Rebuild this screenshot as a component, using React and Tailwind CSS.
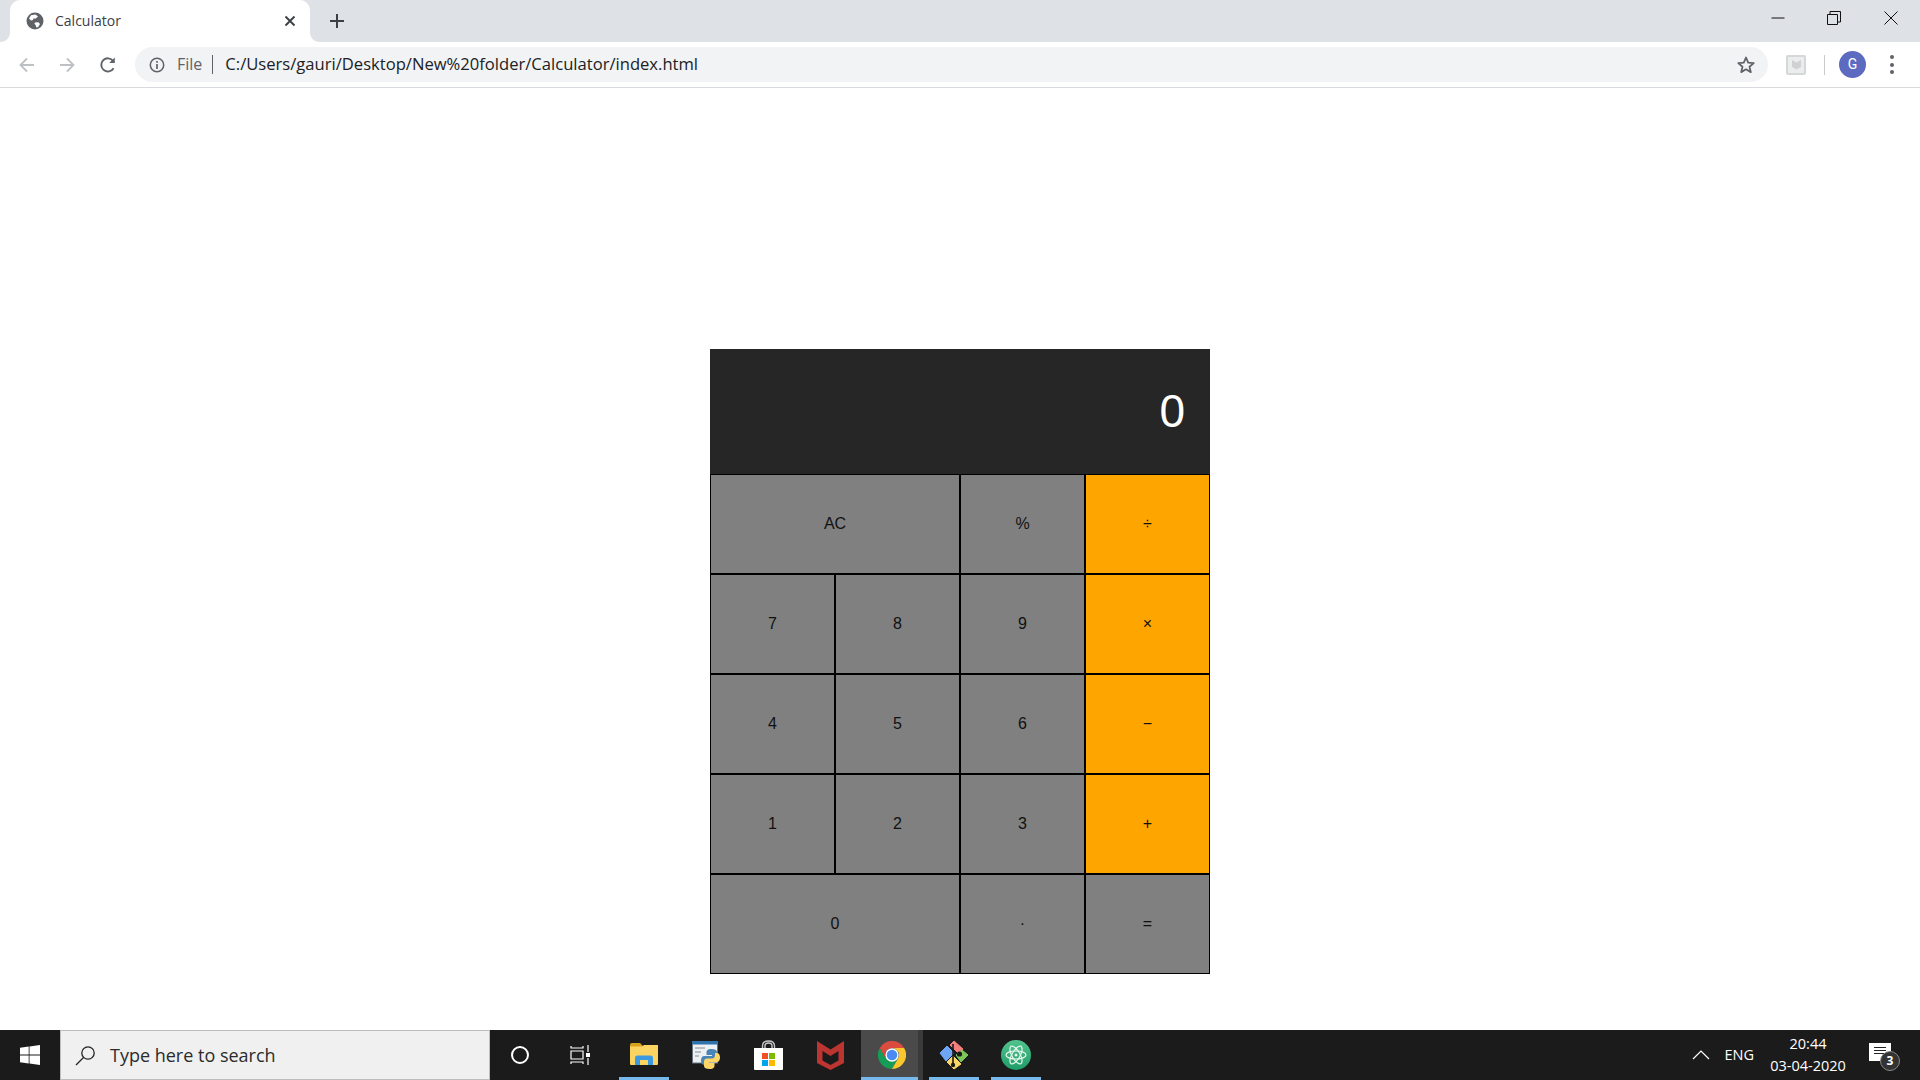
import { useState } from "react";

const uiFont = "font-['Open_Sans','Noto_Sans',sans-serif]";

const Flare = ({ side }) => (
  <svg
    width="10"
    height="10"
    viewBox="0 0 10 10"
    className={`absolute bottom-0 ${side === "left" ? "left-[-10px]" : "right-[-10px]"}`}
  >
    {side === "left" ? (
      <path d="M10 0V10H0C6 10 10 6 10 0Z" fill="#fff" />
    ) : (
      <path d="M0 0V10H10C4 10 0 6 0 0Z" fill="#fff" />
    )}
  </svg>
);

const GlobeIcon = () => (
  <svg width="18" height="18" viewBox="0 0 18 18">
    <circle cx="9" cy="9" r="8.5" fill="#5f6368" />
    <path
      d="M5 3.2L9.5 2.6 12 4.4 9.8 6.6 7.4 6.4 7 8 5 8.4 3 6.4ZM9 10.4L12.4 10.2 14 12 12.2 15 10.4 15.6 9.6 13 8.4 11.8Z"
      fill="#fff"
    />
  </svg>
);

const ToolIcon = ({ children, className }) => (
  <svg width="20" height="20" viewBox="0 0 20 20" fill="none" className={className}>
    {children}
  </svg>
);

const TabStrip = () => (
  <div className="h-[42px] bg-[#dee1e6] flex items-end pl-[10px] shrink-0">
    <div className="relative w-[300px] h-[42px] bg-white rounded-t-[10px] flex items-center pl-[16px] pr-[12px]">
      <Flare side="left" />
      <Flare side="right" />
      <GlobeIcon />
      <span className={`ml-[11px] mb-[2px] text-[14px] text-[#3c4043] ${uiFont}`}>Calculator</span>
      <svg width="12" height="12" viewBox="0 0 12 12" className="ml-auto mr-[2px]">
        <path d="M1.5 1.5L10.5 10.5M10.5 1.5L1.5 10.5" stroke="#3c4043" strokeWidth="1.9" />
      </svg>
    </div>
    <div className="h-[42px] flex items-center ml-[19px]">
      <svg width="16" height="16" viewBox="0 0 16 16">
        <path d="M8 1V15M1 8H15" stroke="#3c4043" strokeWidth="2" />
      </svg>
    </div>
    <div className="ml-auto h-[36px] self-start flex items-center text-black">
      <div className="w-[56px] flex justify-center">
        <svg width="14" height="14" viewBox="0 0 14 14">
          <path d="M0.5 7H13.5" stroke="#111" strokeWidth="1" />
        </svg>
      </div>
      <div className="w-[56px] flex justify-center">
        <svg width="14" height="14" viewBox="0 0 14 14" fill="none">
          <path d="M0.5 3.5H10.5V13.5H0.5ZM3 3.5V0.5H13.5V11H10.5" stroke="#111" strokeWidth="1" />
        </svg>
      </div>
      <div className="w-[58px] flex justify-center">
        <svg width="14" height="14" viewBox="0 0 14 14">
          <path d="M0.5 0.5L13.5 13.5M13.5 0.5L0.5 13.5" stroke="#111" strokeWidth="1" />
        </svg>
      </div>
    </div>
  </div>
);

const Toolbar = () => (
  <div className="h-[46px] bg-white border-b border-b-[#d9dadd] flex items-center shrink-0">
    <div className="w-[135px] flex items-center pl-[17px]">
      <ToolIcon>
        <path d="M17 10H4M10 3.5L3.5 10L10 16.5" stroke="#bdc1c6" strokeWidth="1.8" />
      </ToolIcon>
      <ToolIcon className="ml-[20px]">
        <path d="M3 10H16M10 3.5L16.5 10L10 16.5" stroke="#bdc1c6" strokeWidth="1.8" />
      </ToolIcon>
      <ToolIcon className="ml-[21px]">
        <path d="M15.6 13.2A6.6 6.6 0 1 1 15.2 6" stroke="#5f6368" strokeWidth="1.9" />
        <path d="M16.8 2.4V8H11.2Z" fill="#5f6368" />
      </ToolIcon>
    </div>
    <div className="w-[1633px] h-[35px] bg-[#f1f3f4] rounded-full flex items-center pl-[14px] pr-[12px]">
      <svg width="16" height="16" viewBox="0 0 16 16" fill="none">
        <circle cx="8" cy="8" r="6.7" stroke="#5f6368" strokeWidth="1.5" />
        <path d="M8 7V12M8 4V5.8" stroke="#5f6368" strokeWidth="1.7" />
      </svg>
      <span className={`ml-[12px] mb-[1px] text-[16px] text-[#5f6368] ${uiFont}`}>File</span>
      <span className="ml-[10px] w-[1px] h-[19px] bg-[#5f6368]"></span>
      <span className={`ml-[12px] text-[16.6px] text-[#202124] ${uiFont}`}>
        C:/Users/gauri/Desktop/New%20folder/Calculator/index.html
      </span>
      <svg width="20" height="20" viewBox="0 0 20 20" fill="none" className="ml-auto">
        <path
          d="M10 2.5L12.2 7.6 17.7 8.1 13.5 11.7 14.8 17.1 10 14.3 5.2 17.1 6.5 11.7 2.3 8.1 7.8 7.6Z"
          stroke="#5f6368"
          strokeWidth="1.8"
          strokeLinejoin="round"
        />
      </svg>
    </div>
    <div className="flex-1 flex items-center pl-[18px]">
      <div className="w-[20px] h-[20px] bg-[#eceeee] border-2 border-[#d5d8d8] rounded-[2px] flex items-center justify-center">
        <svg width="11" height="11" viewBox="0 0 11 11">
          <path d="M1 1L5.5 3.5 10 1V8L5.5 10.5 1 8Z" fill="#cfd2d2" />
        </svg>
      </div>
      <span className="ml-[18px] w-[1px] h-[20px] bg-[#c9cbce]"></span>
      <div className="ml-[14px] w-[27px] h-[27px] rounded-full bg-[#5c6bc0] flex items-center justify-center text-white text-[14px] font-['Roboto',sans-serif]">
        G
      </div>
      <div className="ml-[24px] flex flex-col gap-[3.5px]">
        <span className="w-[4px] h-[4px] rounded-full bg-[#5f6368]"></span>
        <span className="w-[4px] h-[4px] rounded-full bg-[#5f6368]"></span>
        <span className="w-[4px] h-[4px] rounded-full bg-[#5f6368]"></span>
      </div>
    </div>
  </div>
);

const keys = [
  { label: "AC", wide: true },
  { label: "%" },
  { label: "÷", op: true },
  { label: "7" },
  { label: "8" },
  { label: "9" },
  { label: "×", op: true },
  { label: "4" },
  { label: "5" },
  { label: "6" },
  { label: "−", op: true },
  { label: "1" },
  { label: "2" },
  { label: "3" },
  { label: "+", op: true },
  { label: "0", wide: true },
  { label: "·" },
  { label: "=" },
];

const Calculator = () => {
  const [value, setValue] = useState("0");

  const press = (label) => {
    if (label === "AC") setValue("0");
    else if (/[0-9]/.test(label)) setValue(value === "0" ? label : value + label);
  };

  return (
    <div className="w-[500px] font-['Liberation_Sans',Arial,sans-serif]">
      <div className="h-[125px] bg-[#262626] text-white text-[46px] flex items-center justify-end pr-[25px]">
        {value}
      </div>
      <div className="grid grid-cols-4">
        {keys.map((key) => (
          <button
            key={key.label}
            onClick={() => press(key.label)}
            className={`h-[100px] border border-black text-[16px] text-[#111] ${
              key.wide ? "col-span-2" : ""
            } ${key.op ? "bg-[#ffa500]" : "bg-[#808080]"}`}
          >
            {key.label}
          </button>
        ))}
      </div>
    </div>
  );
};

const FolderIcon = () => (
  <svg width="28" height="26" viewBox="0 0 28 26">
    <path d="M0 3Q0 1 2 1H10L13 4H26Q28 4 28 6V10H0Z" fill="#d9a21b" />
    <path d="M0 4.5H12L14 3H28V22Q28 23 27 23H1Q0 23 0 22Z" fill="#fcd462" />
    <path d="M5 23V16Q5 13.5 7.5 13.5H20.5Q23 13.5 23 16V23H18V18H10V23Z" fill="#3d9ae0" />
  </svg>
);

const PythonIcon = () => (
  <svg width="29" height="29" viewBox="0 0 29 29">
    <rect x="0.5" y="1" width="25" height="21" fill="#eef1f4" stroke="#69737d" strokeWidth="1" />
    <rect x="0" y="0" width="26" height="3.5" fill="#2f73ad" />
    <path d="M3 7H13M3 11H9M3 15H7" stroke="#a9adb2" strokeWidth="1.4" />
    <path
      d="M19.5 8C15 8 14.5 10 14.5 11.5V14H20V15H12.5C10 15 9 17 9 19.5 9 22 10 24 12.5 24H14V21.5C14 20 15 18.5 17 18.5H22C24 18.5 25 17 25 15.5V11C25 9 23 8 19.5 8Z"
      fill="#4b85b8"
    />
    <path
      d="M19.5 8C15 8 14.5 10 14.5 11.5V14H20V15H12.5C10 15 9 17 9 19.5 9 22 10 24 12.5 24H14V21.5C14 20 15 18.5 17 18.5H22C24 18.5 25 17 25 15.5V11C25 9 23 8 19.5 8Z"
      fill="#fcd667"
      transform="rotate(180 18.5 18)"
    />
  </svg>
);

const StoreIcon = () => (
  <svg width="29" height="30" viewBox="0 0 29 30">
    <path
      d="M8.5 9V6Q8.5 1 14.5 1 20.5 1 20.5 6V9M11 9V6Q11 3 14.5 3 18 3 18 6V9"
      fill="none"
      stroke="#c9c9c9"
      strokeWidth="1.4"
    />
    <path d="M0 8H29V29Q29 30 28 30H1Q0 30 0 29Z" fill="#fff" />
    <rect x="8" y="13" width="6" height="6" fill="#f25022" />
    <rect x="15" y="13" width="6" height="6" fill="#7fba00" />
    <rect x="8" y="20" width="6" height="6" fill="#00a4ef" />
    <rect x="15" y="20" width="6" height="6" fill="#ffb900" />
  </svg>
);

const McafeeIcon = () => (
  <svg width="27" height="29" viewBox="0 0 27 29">
    <path
      d="M0 0L13.5 8.5 27 0V22L13.5 29 0 22ZM5.5 10V19.5L13.5 24 21.5 19.5V10L13.5 15Z"
      fill="#bd3530"
      fillRule="evenodd"
    />
  </svg>
);

const ChromeIcon = () => (
  <svg width="28" height="28" viewBox="0 0 48 48">
    <path d="M3.2 12A24 24 0 0 0 24 48L34.4 30H13.6Z" fill="#169c56" />
    <path d="M44.8 12A24 24 0 0 1 24 48L34.4 30A12 12 0 0 0 24 12Z" fill="#fbc72d" />
    <path d="M3.2 12A24 24 0 0 1 44.8 12H24A12 12 0 0 0 13.6 30Z" fill="#dc4c3e" />
    <circle cx="24" cy="24" r="11.5" fill="#fff" />
    <circle cx="24" cy="24" r="9" fill="#4a8af4" />
  </svg>
);

const GitIcon = () => (
  <svg width="30" height="30" viewBox="0 0 30 30">
    <path d="M15 1L24 9 19 13 11 5Z" fill="#f57e7e" stroke="#f57e7e" strokeLinejoin="round" />
    <path d="M1 13L8 6 15 13 7 21Z" fill="#6ea6f5" stroke="#6ea6f5" strokeLinejoin="round" />
    <path d="M17 15L23 10 29 15 22 22Z" fill="#7dc75a" stroke="#7dc75a" strokeLinejoin="round" />
    <path d="M8 22L14 16 22 24 15 29Z" fill="#fbd765" stroke="#fbd765" strokeLinejoin="round" />
    <path d="M14 4V24" stroke="#1b1b1b" strokeWidth="1.6" />
    <circle cx="14" cy="25" r="2.2" fill="#1b1b1b" />
    <circle cx="20.5" cy="14" r="2.6" fill="#1b1b1b" />
  </svg>
);

const AtomIcon = () => (
  <svg width="30" height="30" viewBox="0 0 30 30" fill="none">
    <defs>
      <linearGradient id="atomFill" x1="0" y1="0" x2="0" y2="1">
        <stop offset="0" stopColor="#52c48d" />
        <stop offset="1" stopColor="#1f9c68" />
      </linearGradient>
    </defs>
    <circle cx="15" cy="15" r="15" fill="url(#atomFill)" />
    <g stroke="#e9f7ef" strokeWidth="1.2">
      <ellipse cx="15" cy="15" rx="10" ry="4" />
      <ellipse cx="15" cy="15" rx="10" ry="4" transform="rotate(60 15 15)" />
      <ellipse cx="15" cy="15" rx="10" ry="4" transform="rotate(120 15 15)" />
    </g>
    <circle cx="15" cy="15" r="1.5" fill="#e9f7ef" />
  </svg>
);

const TaskSlot = ({ children, open, active }) => (
  <div className={`relative w-[62px] h-full flex items-center justify-center ${active ? "bg-[#4a4a4a]" : ""}`}>
    {children}
    {open && (
      <span className={`absolute bottom-0 h-[3px] bg-[#76b9ed] ${active ? "inset-x-0" : "inset-x-[6px]"}`}></span>
    )}
    {active && <span className="absolute right-0 top-0 bottom-0 w-[5px] bg-[#3a3a3a]"></span>}
  </div>
);

const Taskbar = () => (
  <div className={`h-[50px] bg-[#1b1b1b] flex items-stretch shrink-0 text-white ${uiFont}`}>
    <div className="w-[60px] flex items-center justify-center">
      <svg width="20" height="20" viewBox="0 0 20 20" fill="#fff">
        <path d="M0 2.8L8.7 1.6V9.6H0ZM9.5 1.5L20 0V9.6H9.5ZM0 10.4H8.7V18.4L0 17.2ZM9.5 10.4H20V20L9.5 18.5Z" />
      </svg>
    </div>
    <div className="w-[430px] bg-[#f0f0f0] border border-[#bdbdbd] flex items-center pl-[14px]">
      <svg width="21" height="21" viewBox="0 0 21 21" fill="none">
        <circle cx="13" cy="8" r="6.2" stroke="#222" strokeWidth="1.3" />
        <path d="M8.5 12.5L1 20" stroke="#222" strokeWidth="1.3" />
      </svg>
      <span className="ml-[14px] text-[18px] text-[#2b2b2b]">Type here to search</span>
    </div>
    <div className="w-[60px] flex items-center justify-center">
      <span className="w-[18px] h-[18px] rounded-full border-[2.5px] border-white"></span>
    </div>
    <div className="w-[63px] flex items-center justify-center pr-[3px]">
      <svg width="20" height="20" viewBox="0 0 20 20" fill="none" stroke="#fff" strokeWidth="1.2">
        <path d="M1 1V3H13V1M1 6H13V14H1ZM1 19V17H13V19M18 0V7M18 13V20" />
        <rect x="16" y="8" width="4" height="4" fill="#fff" stroke="none" />
      </svg>
    </div>
    <TaskSlot open>
      <FolderIcon />
    </TaskSlot>
    <TaskSlot>
      <PythonIcon />
    </TaskSlot>
    <TaskSlot>
      <StoreIcon />
    </TaskSlot>
    <TaskSlot>
      <McafeeIcon />
    </TaskSlot>
    <TaskSlot open active>
      <ChromeIcon />
    </TaskSlot>
    <TaskSlot open>
      <GitIcon />
    </TaskSlot>
    <TaskSlot open>
      <AtomIcon />
    </TaskSlot>
    <div className="flex-1 flex items-center justify-end">
      <svg width="18" height="10" viewBox="0 0 18 10" fill="none" className="mr-[14px]">
        <path d="M1 9L9 1 17 9" stroke="#fff" strokeWidth="1.2" />
      </svg>
      <span className="text-[14.5px] mr-[15px]">ENG</span>
      <div className="w-[78px] flex flex-col items-center text-[14.5px] leading-[22px] mt-[-1px]">
        <span>20:44</span>
        <span>03-04-2020</span>
      </div>
      <div className="relative w-[22px] h-[18px] bg-white ml-[22px] mr-[29px] mt-[-6px] flex flex-col gap-[2px] px-[5px] pt-[4px]">
        <span className="h-[1px] bg-[#222]"></span>
        <span className="h-[1px] bg-[#222]"></span>
        <span className="h-[1px] bg-[#222]"></span>
        <span className="absolute right-[-9px] bottom-[-10px] w-[20px] h-[20px] rounded-full bg-[#333] border border-[#888] text-[12px] font-bold leading-[18px] text-center text-white">
          3
        </span>
      </div>
    </div>
  </div>
);

export default function App() {
  return (
    <div className="w-[1920px] h-[1080px] flex flex-col bg-white overflow-hidden">
      <TabStrip />
      <Toolbar />
      <main className="flex-1 flex justify-center pt-[261px]">
        <Calculator />
      </main>
      <Taskbar />
    </div>
  );
}
